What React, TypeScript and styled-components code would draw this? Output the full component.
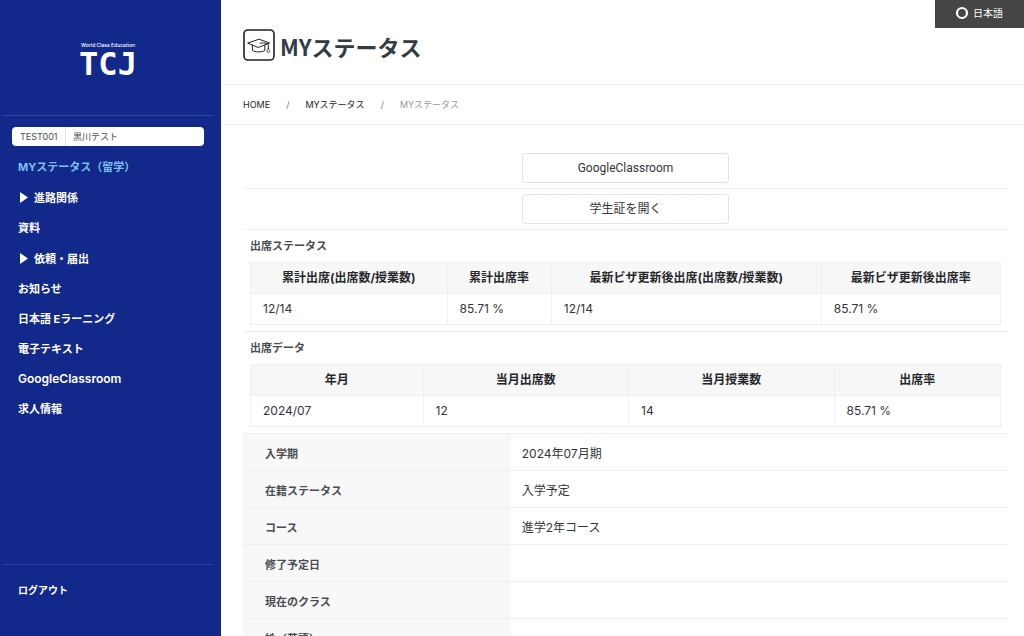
import React from 'react';
import styled, { createGlobalStyle, css } from 'styled-components';

const GlobalStyle = createGlobalStyle`
  *, *::before, *::after { box-sizing: border-box; }
  body {
    margin: 0;
    background: #fff;
    color: #32353a;
    font-family: Inter, "Noto Sans CJK JP", sans-serif;
    font-size: 12px;
    line-height: 18px;
  }
  a { color: inherit; text-decoration: none; }
  button { font: inherit; color: inherit; cursor: pointer; }
`;

const Shell = styled.div`
  display: grid;
  grid-template-columns: 221px minmax(0, 1fr);
  height: 100vh;
`;

/* ---------- Sidebar ---------- */

const Sidebar = styled.aside`
  display: flex;
  flex-direction: column;
  background: #12288a;
  color: #fff;
  padding: 0 8px 0 3px;
`;

const LogoArea = styled.a`
  display: flex;
  flex-direction: column;
  align-items: center;
  height: 116px;
  padding-top: 42px;
  border-bottom: 1px solid #344797;
`;

const LogoTagline = styled.span`
  font: 500 5px/6px Inter, sans-serif;
`;

const LogoMark = styled.span`
  font: 700 32px/32px "DejaVu Sans Mono", monospace;
`;

const UserBox = styled.div`
  display: flex;
  margin: 11px 9px 0;
  height: 19px;
  border-radius: 4px;
  background: #fff;
  color: #4a4d52;
  font-size: 9px;
  line-height: 19px;
`;

const UserId = styled.span`
  width: 54px;
  padding-left: 8px;
  border-right: 1px solid #e2e3e6;
`;

const UserName = styled.span`
  padding-left: 7px;
`;

const NavList = styled.ul`
  list-style: none;
  margin: 6px 0 0;
  padding: 0 15px;
  flex: 1;
`;

const navText = css`
  display: flex;
  align-items: center;
  width: 100%;
  font-size: 11px;
  font-weight: 700;
  line-height: 18px;
`;

const NavLink = styled.a<{ $active?: boolean; $latin?: boolean }>`
  ${navText}
  height: 30px;
  color: ${(p) => (p.$active ? '#7cc0ee' : '#fff')};
  ${(p) => p.$latin && css`font-size: 12px; font-weight: 600;`}
`;

const NavToggle = styled.button`
  ${navText}
  height: 31px;
  gap: 6px;
  padding: 0 0 0 2px;
  border: 0;
  background: none;
  color: #fff;
`;

const SidebarFooter = styled.div`
  height: 72px;
  padding: 16px 15px 0;
  border-top: 1px solid #2c409a;
  font-size: 10px;
  font-weight: 700;
`;

/* ---------- Main ---------- */

const Main = styled.main`
  position: relative;
  overflow-y: auto;
  scrollbar-width: none;
`;

const LanguageButton = styled.button`
  position: absolute;
  top: 0;
  right: 0;
  display: flex;
  align-items: center;
  gap: 4px;
  width: 89px;
  height: 28px;
  padding: 0 0 3px 20px;
  border: 0;
  background: #454545;
  color: #fff;
  font-size: 10px;
`;

const PageHeader = styled.header`
  display: flex;
  align-items: center;
  gap: 5px;
  height: 85px;
  padding: 5px 22px 0;
  border-bottom: 1px solid #f0f0f1;
`;

const PageTitle = styled.h1`
  margin: 0;
  padding-top: 2px;
  color: #333b45;
  font-family: "Noto Sans CJK JP", sans-serif;
  font-size: 22px;
  font-weight: 700;
  line-height: 32px;
`;

const Breadcrumb = styled.nav`
  display: flex;
  align-items: center;
  gap: 16px;
  height: 40px;
  padding: 0 22px;
  border-bottom: 1px solid #f0f0f1;
  color: #222;
  font-size: 9px;
`;

const Separator = styled.span`
  color: #777;
`;

const CurrentCrumb = styled.span`
  color: #999;
`;

const Content = styled.div`
  padding: 23px 16px 0 22px;
`;

const ActionRow = styled.div`
  display: flex;
  justify-content: center;
  padding: 5px 0;
  border-bottom: 1px solid #f0f0f1;
`;

const ActionButton = styled.button`
  width: 27%;
  height: 30px;
  border: 1px solid #e2e3e5;
  border-radius: 3px;
  background: #fff;
  font-family: Roboto, "Noto Sans CJK JP", sans-serif;
`;

const Section = styled.section`
  padding: 7px 7px 6px;
  border-bottom: 1px solid #ededee;
`;

const SectionTitle = styled.h2`
  margin: 0 0 7px;
  color: #4a4d52;
  font-size: 11px;
  font-weight: 600;
  line-height: 18px;
`;

const DataTable = styled.table`
  width: 100%;
  table-layout: fixed;
  border-collapse: collapse;

  th, td {
    height: 31px;
    padding: 0 12px;
    border: 1px solid #efeff0;
    line-height: 18px;
    white-space: nowrap;
  }
  th {
    background: #f7f7f7;
    color: #26282c;
    font-weight: 700;
    text-align: center;
  }
`;

const ProfileTable = styled.table`
  width: 100%;
  table-layout: fixed;
  border-collapse: separate;
  border-spacing: 0;

  th, td {
    height: 37px;
    padding: 4px 11px 0;
    border-bottom: 1px solid #efeff0;
    text-align: left;
  }
  th {
    width: 35%;
    padding-left: 22px;
    background: #f8f8f8;
    color: #4a4d52;
    font-size: 11px;
    font-weight: 600;
  }
`;

const GraduationIcon = () => (
  <svg width="32" height="32" viewBox="0 0 32 32" fill="none" stroke="#231f20" strokeLinejoin="round" strokeLinecap="round" aria-hidden="true">
    <rect x="1" y="1" width="30" height="30" rx="4" strokeWidth="1.6" />
    <g strokeWidth="1">
      <path d="M5 14 16 10.2 26.6 14 15.6 18.4Z" />
      <path d="M9.4 16v5.4c2.2 2 10 2 12.4 0V16.2" />
      <path d="M17 14.2c3-.6 7.6-.2 8.3 1.5v4" />
      <path d="M25.3 19.6c-2.2 2.2-1.6 3.8 0 3.8s2.2-1.6 0-3.8Z" strokeWidth=".8" />
    </g>
  </svg>
);

const Triangle = () => (
  <svg width="8" height="11" viewBox="0 0 8 11" fill="#fff" aria-hidden="true">
    <path d="M0 0 8 5.5 0 11Z" />
  </svg>
);

const Ring = () => (
  <svg width="14" height="14" viewBox="0 0 14 14" fill="none" stroke="#fff" strokeWidth="2.2" aria-hidden="true">
    <circle cx="7" cy="7" r="5" />
  </svg>
);

type NavItem = { label: string; active?: boolean; group?: boolean; latin?: boolean };

const navItems: NavItem[] = [
  { label: 'MYステータス（留学）', active: true },
  { label: '進路関係', group: true },
  { label: '資料' },
  { label: '依頼・届出', group: true },
  { label: 'お知らせ' },
  { label: '日本語 Eラーニング' },
  { label: '電子テキスト' },
  { label: 'GoogleClassroom', latin: true },
  { label: '求人情報' },
];

type AttendanceProps = { title: string; widths: string[]; heads: string[]; cells: string[] };

const Attendance = ({ title, widths, heads, cells }: AttendanceProps) => (
  <Section>
    <SectionTitle>{title}</SectionTitle>
    <DataTable aria-label={title}>
      <colgroup>
        {widths.map((w, i) => <col key={i} width={w} />)}
      </colgroup>
      <thead>
        <tr>{heads.map((h) => <th key={h} scope="col">{h}</th>)}</tr>
      </thead>
      <tbody>
        <tr>{cells.map((c, i) => <td key={i}>{c}</td>)}</tr>
      </tbody>
    </DataTable>
  </Section>
);

const profile: [string, string][] = [
  ['入学期', '2024年07月期'],
  ['在籍ステータス', '入学予定'],
  ['コース', '進学2年コース'],
  ['修了予定日', ''],
  ['現在のクラス', ''],
  ['姓（英語）', ''],
];

export default function App() {
  return (
    <>
      <GlobalStyle />
      <Shell>
        <Sidebar>
          <LogoArea href="#">
            <LogoTagline>World Class Education</LogoTagline>
            <LogoMark>TCJ</LogoMark>
          </LogoArea>
          <UserBox>
            <UserId>TEST001</UserId>
            <UserName>黒川テスト</UserName>
          </UserBox>
          <NavList>
            {navItems.map((item) => (
              <li key={item.label}>
                {item.group ? (
                  <NavToggle type="button"><Triangle />{item.label}</NavToggle>
                ) : (
                  <NavLink href="#" $active={item.active} $latin={item.latin}>{item.label}</NavLink>
                )}
              </li>
            ))}
          </NavList>
          <SidebarFooter><a href="#">ログアウト</a></SidebarFooter>
        </Sidebar>
        <Main>
          <LanguageButton type="button"><Ring />日本語</LanguageButton>
          <PageHeader>
            <GraduationIcon />
            <PageTitle>MYステータス</PageTitle>
          </PageHeader>
          <Breadcrumb aria-label="breadcrumb">
            <a href="#">HOME</a>
            <Separator>/</Separator>
            <a href="#">MYステータス</a>
            <Separator>/</Separator>
            <CurrentCrumb>MYステータス</CurrentCrumb>
          </Breadcrumb>
          <Content>
            <ActionRow><ActionButton type="button">GoogleClassroom</ActionButton></ActionRow>
            <ActionRow><ActionButton type="button">学生証を開く</ActionButton></ActionRow>
            <Attendance
              title="出席ステータス"
              widths={['26.2%', '13.9%', '36%', '23.9%']}
              heads={['累計出席(出席数/授業数)', '累計出席率', '最新ビザ更新後出席(出席数/授業数)', '最新ビザ更新後出席率']}
              cells={['12/14', '85.71 %', '12/14', '85.71 %']}
            />
            <Attendance
              title="出席データ"
              widths={['23%', '27.4%', '27.4%', '22.2%']}
              heads={['年月', '当月出席数', '当月授業数', '出席率']}
              cells={['2024/07', '12', '14', '85.71 %']}
            />
            <ProfileTable aria-label="学生情報">
              <tbody>
                {profile.map(([label, value]) => (
                  <tr key={label}>
                    <th scope="row">{label}</th>
                    <td>{value}</td>
                  </tr>
                ))}
              </tbody>
            </ProfileTable>
          </Content>
        </Main>
      </Shell>
    </>
  );
}
